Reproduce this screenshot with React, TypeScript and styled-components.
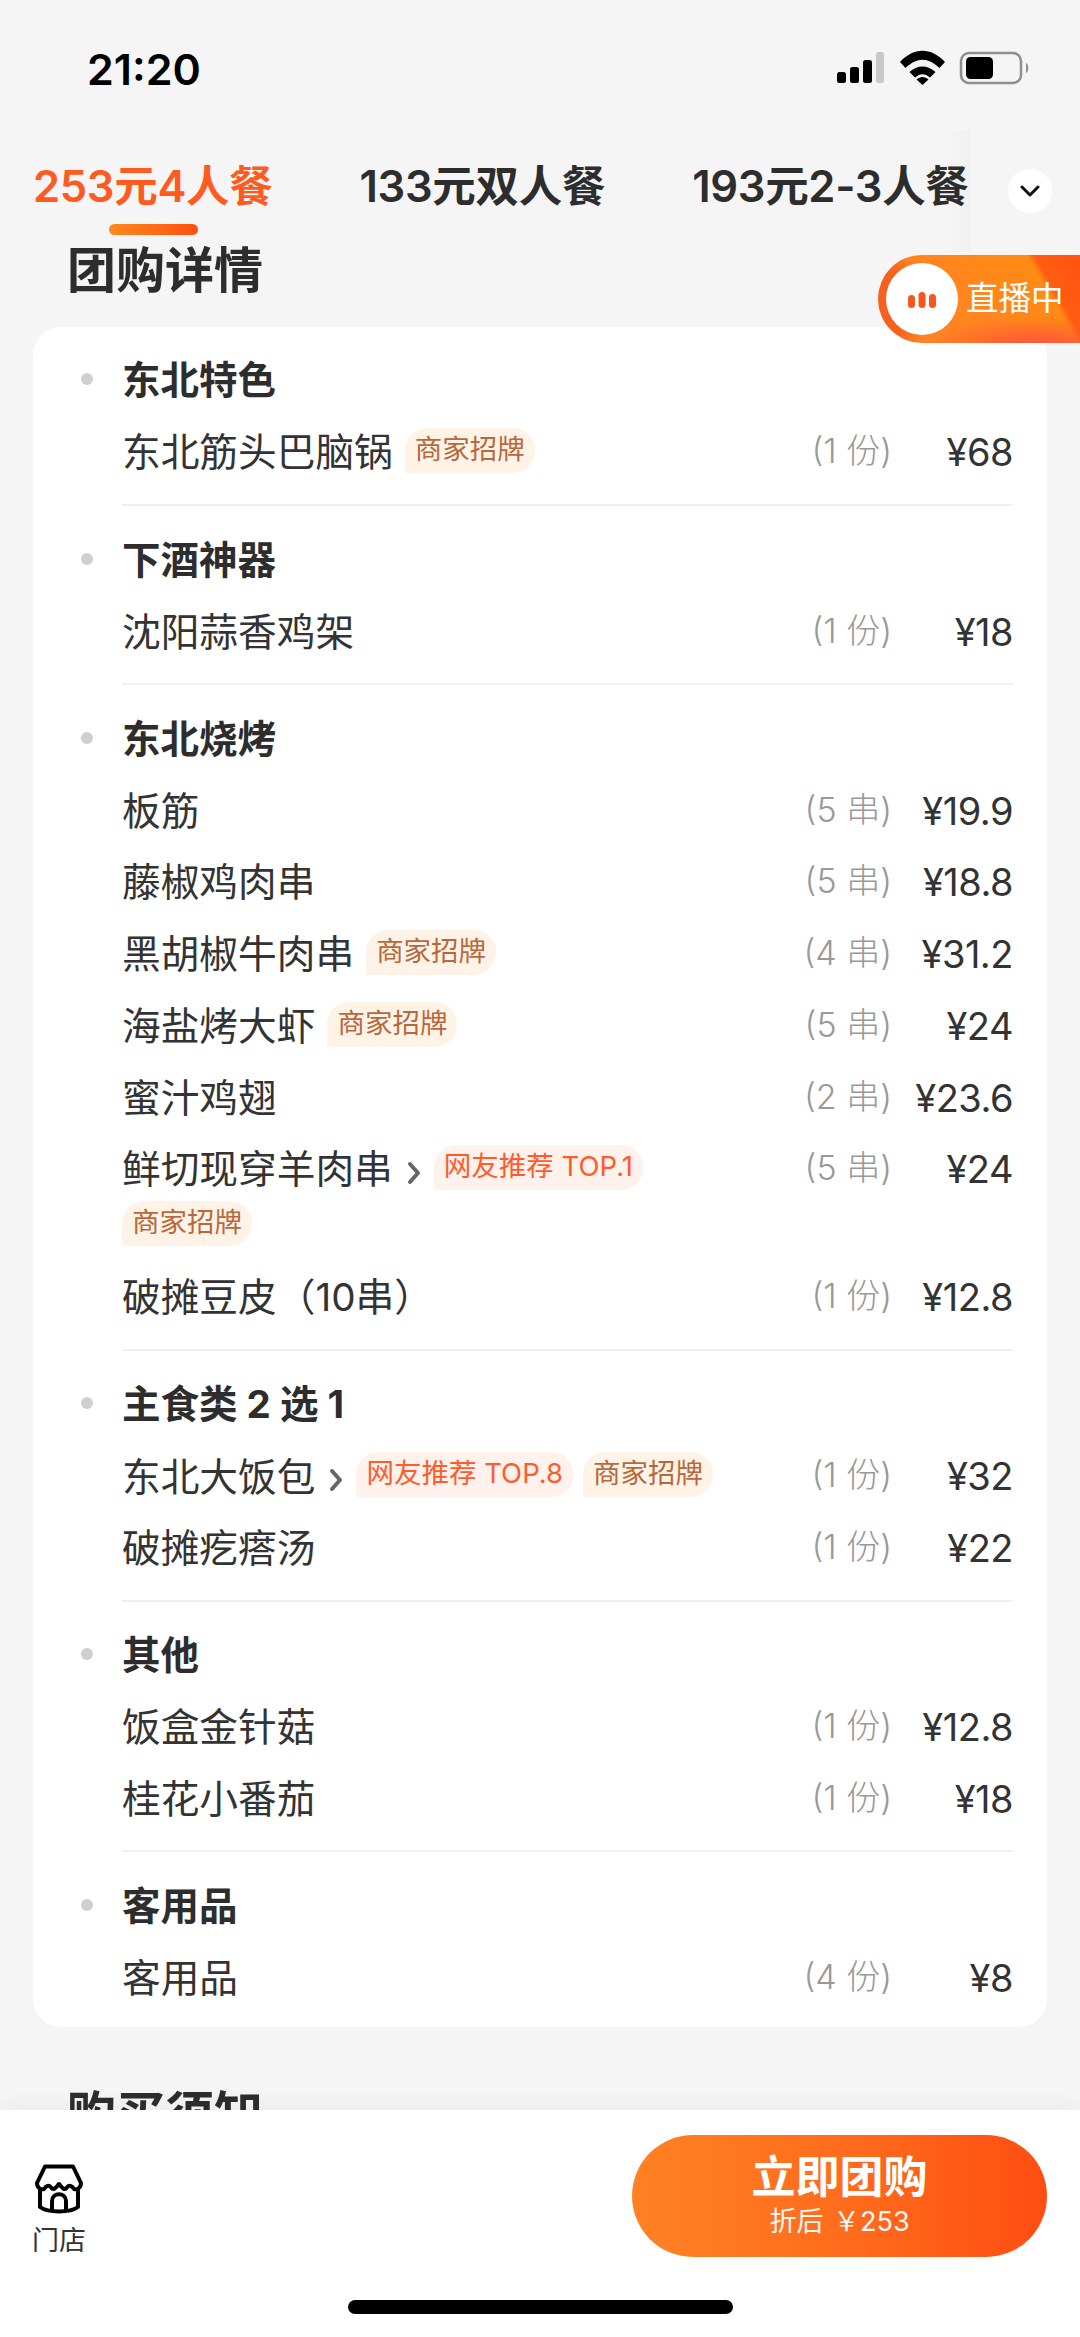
import React from "react";
import styled, { createGlobalStyle } from "styled-components";

const FONT = `"Inter", "Noto Sans CJK SC", "Noto Sans", sans-serif`;

const Global = createGlobalStyle`
  html, body { margin: 0; padding: 0; background: #f5f5f5; }
  * { box-sizing: border-box; }
`;

const Page = styled.div`
  position: relative;
  width: 1080px;
  height: 2337px;
  overflow: hidden;
  display: flex;
  flex-direction: column;
  background: #f5f5f5;
  font-family: ${FONT};
  color: #2d2d2d;
`;

const Scroll = styled.main`
  flex: 1;
  min-height: 0;
  overflow: hidden;
`;

const StatusBar = styled.header`
  height: 130px;
  padding: 46px 51px 0 87px;
  display: flex;
  justify-content: space-between;
  align-items: flex-start;
`;

const Time = styled.span`
  font-family: "Inter", sans-serif;
  font-size: 43px;
  line-height: 46px;
  font-weight: 600;
  color: #000;
`;

const StatusIcons = styled.svg`
  display: block;
  margin-top: 4px;
`;

const TabBar = styled.nav`
  position: relative;
  height: 122px;
  display: flex;
  align-items: flex-start;
`;

const TabScroller = styled.div`
  position: relative;
  width: 970px;
  height: 122px;
  padding: 21px 0 0 33px;
  display: flex;
  gap: 87px;
  overflow: hidden;
  flex: none;
  &::after {
    content: "";
    position: absolute;
    top: 0;
    right: 0;
    width: 24px;
    height: 100%;
    background: linear-gradient(90deg, rgba(0, 0, 0, 0), rgba(0, 0, 0, 0.018));
  }
`;

const Tab = styled.div<{ $active?: boolean }>`
  position: relative;
  flex: none;
  font-size: 43.5px;
  line-height: 70px;
  font-weight: 600;
  letter-spacing: -0.3px;
  white-space: nowrap;
  color: ${(p) => (p.$active ? "#ff5a1f" : "#2d2d2d")};
`;

const TabLine = styled.span`
  position: absolute;
  left: 76px;
  top: 73px;
  width: 89px;
  height: 11px;
  border-radius: 6px;
  background: linear-gradient(90deg, #ff8a1c, #ff4f12);
`;

const Expand = styled.button`
  position: absolute;
  left: 1008px;
  top: 39px;
  width: 44px;
  height: 44px;
  border: 0;
  padding: 0;
  border-radius: 50%;
  background: #fff;
  display: flex;
  align-items: center;
  justify-content: center;
`;

const Heading = styled.h2`
  margin: 0;
  padding-left: 67px;
  height: 75px;
  font-size: 49px;
  line-height: 38px;
  font-weight: 600;
  color: #2d2d2d;
`;

const Card = styled.section`
  margin: 0 33px;
  padding: 18px 34px 0 89px;
  height: 1700px;
  background: #fff;
  border-radius: 28px;
`;

const Group = styled.div<{ $last?: boolean }>`
  padding-bottom: ${(p) => (p.$last ? "0" : "15px")};
  margin-bottom: ${(p) => (p.$last ? "0" : "18.6px")};
  border-bottom: ${(p) => (p.$last ? "0" : "2px solid #f0f0f0")};
`;

const GroupTitle = styled.h3`
  position: relative;
  margin: 0;
  padding: 8px 0 9px;
  font-size: 38.5px;
  line-height: 55px;
  font-weight: 700;
  color: #2d2d2d;
  &::before {
    content: "";
    position: absolute;
    left: -41px;
    top: 28px;
    width: 12px;
    height: 12px;
    border-radius: 50%;
    background: #cfcfcf;
  }
`;

const Row = styled.div`
  display: flex;
  align-items: flex-start;
  padding: 8px 0;
`;

const NameArea = styled.div`
  width: 630px;
  flex: none;
  display: flex;
  flex-wrap: wrap;
  align-items: center;
  column-gap: 10px;
`;

const Name = styled.span`
  font-size: 38.7px;
  line-height: 55.5px;
  color: #333;
  white-space: nowrap;
  margin-right: 2px;
`;

const Chevron = styled.svg`
  display: block;
  flex: none;
  margin: 5px 3px 0 2px;
`;

const Tag = styled.span<{ $kind: "brand" | "rank" }>`
  height: 45px;
  padding: 0 10px;
  font-size: 27.5px;
  line-height: 43px;
  white-space: nowrap;
  border-radius: 22px 22px 22px 2px;
  margin: 3px 0 8px;
  background: ${(p) => (p.$kind === "brand" ? "#fff3e8" : "#fff1ec")};
  color: ${(p) => (p.$kind === "brand" ? "#b9683b" : "#ff5c2e")};
`;

const Qty = styled.span`
  flex: 1;
  text-align: right;
  font-size: 34px;
  line-height: 52px;
  font-weight: 300;
  color: #999;
  white-space: nowrap;
`;

const Price = styled.span`
  width: 121px;
  flex: none;
  text-align: right;
  font-size: 38px;
  line-height: 55.5px;
  letter-spacing: -0.5px;
  color: #333;
  white-space: nowrap;
`;

const NextHeading = styled.h2`
  margin: 0;
  padding: 64px 0 0 67px;
  font-size: 49px;
  line-height: 48px;
  font-weight: 600;
`;

const LivePill = styled.div`
  position: absolute;
  left: 878px;
  top: 255px;
  width: 202px;
  height: 88px;
  border-radius: 44px 0 0 44px;
  background:
    radial-gradient(ellipse 110px 30px at 160px 92px, #ff4f3c 0%, rgba(255, 79, 60, 0) 100%),
    radial-gradient(ellipse 50px 60px at 0px 50px, #f5601f 60%, rgba(245, 96, 31, 0) 100%),
    linear-gradient(60deg, #ff7f2a 0%, #ff8a14 79%, #ff5c12 82%, #ff5212 100%);
  display: flex;
  align-items: center;
  padding-left: 8px;
  gap: 8px;
`;

const LiveDot = styled.span`
  width: 72px;
  height: 72px;
  border-radius: 50%;
  background: #fff;
  display: flex;
  align-items: center;
  justify-content: center;
  flex: none;
`;

const LiveText = styled.span`
  font-size: 32.5px;
  line-height: 40px;
  color: #fff;
  white-space: nowrap;
`;

const BottomBar = styled.footer`
  position: relative;
  height: 227px;
  flex: none;
  background: #fff;
  box-shadow: 0 -8px 16px rgba(0, 0, 0, 0.035);
  padding: 25px 33px 0 32px;
  display: flex;
  justify-content: space-between;
  align-items: flex-start;
`;

const StoreLink = styled.div`
  padding-top: 29px;
  display: flex;
  flex-direction: column;
  align-items: center;
  width: 54px;
`;

const StoreLabel = styled.span`
  height: 25px;
  overflow: hidden;
  margin-top: 13px;
  font-size: 27px;
  line-height: 27px;
  color: #333;
  white-space: nowrap;
`;

const BuyButton = styled.button`
  width: 415px;
  height: 122px;
  border: 0;
  border-radius: 61px;
  background: linear-gradient(90deg, #ff8224 0%, #ff6a1c 55%, #ff4d12 100%);
  color: #fff;
  font-family: ${FONT};
  display: flex;
  flex-direction: column;
  align-items: center;
  padding: 14px 0 0;
`;

const BuyTitle = styled.span`
  font-size: 44px;
  line-height: 56px;
  font-weight: 600;
`;

const BuySub = styled.span`
  font-size: 27px;
  line-height: 34px;
  font-weight: 400;
  opacity: 0.95;
  word-spacing: 2px;
`;

const HomeBar = styled.span`
  position: absolute;
  left: 348px;
  top: 190px;
  width: 385px;
  height: 14px;
  border-radius: 7px;
  background: #000;
`;

type Item = { name: string; qty: string; price: string; link?: boolean; tags?: ("brand" | string)[] };
const groups: { title: string; items: Item[] }[] = [
  { title: "东北特色", items: [{ name: "东北筋头巴脑锅", qty: "(1 份)", price: "¥68", tags: ["brand"] }] },
  { title: "下酒神器", items: [{ name: "沈阳蒜香鸡架", qty: "(1 份)", price: "¥18" }] },
  {
    title: "东北烧烤",
    items: [
      { name: "板筋", qty: "(5 串)", price: "¥19.9" },
      { name: "藤椒鸡肉串", qty: "(5 串)", price: "¥18.8" },
      { name: "黑胡椒牛肉串", qty: "(4 串)", price: "¥31.2", tags: ["brand"] },
      { name: "海盐烤大虾", qty: "(5 串)", price: "¥24", tags: ["brand"] },
      { name: "蜜汁鸡翅", qty: "(2 串)", price: "¥23.6" },
      { name: "鲜切现穿羊肉串", qty: "(5 串)", price: "¥24", link: true, tags: ["网友推荐 TOP.1", "brand"] },
      { name: "破摊豆皮（10串）", qty: "(1 份)", price: "¥12.8" },
    ],
  },
  {
    title: "主食类 2 选 1",
    items: [
      { name: "东北大饭包", qty: "(1 份)", price: "¥32", link: true, tags: ["网友推荐 TOP.8", "brand"] },
      { name: "破摊疙瘩汤", qty: "(1 份)", price: "¥22" },
    ],
  },
  {
    title: "其他",
    items: [
      { name: "饭盒金针菇", qty: "(1 份)", price: "¥12.8" },
      { name: "桂花小番茄", qty: "(1 份)", price: "¥18" },
    ],
  },
  { title: "客用品", items: [{ name: "客用品", qty: "(4 份)", price: "¥8" }] },
];

function StatusGlyphs() {
  return (
    <StatusIcons width="193" height="36" viewBox="836 50 193 36">
      <rect x="837" y="72" width="9" height="11" rx="2.5" fill="#000" />
      <rect x="850" y="67" width="9" height="16" rx="2.5" fill="#000" />
      <rect x="863" y="60" width="9" height="23" rx="2.5" fill="#000" />
      <rect x="876" y="52" width="8" height="31" rx="2.5" fill="#c9c9c9" />
      <path d="M900 62 C914 47 931 47 945 62 L939.500 68 C928 57 917 57 905.500 68 Z" fill="#000" />
      <path d="M909.500 72 C917 64.500 928 64.500 935.500 72 L930 77.500 C925 73 920 73 915 77.500 Z" fill="#000" />
      <path d="M916.500 79.500 C920 76 925 76 928.500 79.500 L922.500 85 Z" fill="#000" />
      <rect x="961" y="53" width="60" height="30" rx="8" fill="none" stroke="#8e8e8e" strokeWidth="2.500" />
      <rect x="966" y="57" width="27" height="22" rx="4.500" fill="#000" />
      <path d="M1026 63 C1029 64 1029 72 1026 73 Z" fill="#8e8e8e" />
    </StatusIcons>
  );
}

function StoreIcon() {
  return (
    <svg width="50" height="50" viewBox="0 0 50 50" fill="none" stroke="#000" strokeWidth="4" strokeLinecap="round" strokeLinejoin="round">
      <path d="M11 2.500 H39 L47 19 C47 24 43 26 40 25 C38 22 35 20 32.500 24 C30 27 27 22 25 20 C23 22 20 27 17.500 24 C15 20 12 22 10 25 C7 26 3 24 3 19 Z" />
      <path d="M6 26 V43 C14 49 36 49 44 43 V26" />
      <path d="M18 45 V37 C18 28 32 28 32 37 V45" />
    </svg>
  );
}

export default function App() {
  return (
    <Page>
      <Global />
      <StatusBar>
        <Time>21:20</Time>
        <StatusGlyphs />
      </StatusBar>
      <Scroll>
        <TabBar>
          <TabScroller>
            <Tab $active>
              253元4人餐
              <TabLine />
            </Tab>
            <Tab>133元双人餐</Tab>
            <Tab>193元2-3人餐</Tab>
          </TabScroller>
          <Expand aria-label="展开">
            <svg width="20" height="12" viewBox="0 0 20 12" fill="none" stroke="#111" strokeWidth="3" strokeLinecap="round" strokeLinejoin="round">
              <path d="M2 2 L10 10 L18 2" />
            </svg>
          </Expand>
        </TabBar>
        <Heading>团购详情</Heading>
        <Card>
          {groups.map((g, i) => (
            <Group key={g.title} $last={i === groups.length - 1}>
              <GroupTitle>{g.title}</GroupTitle>
              {g.items.map((it) => (
                <Row key={it.name}>
                  <NameArea>
                    <Name>{it.name}</Name>
                    {it.link && (
                      <Chevron width="14" height="24" viewBox="0 0 14 24" fill="none" stroke="#666" strokeWidth="4" strokeLinecap="round" strokeLinejoin="round">
                        <path d="M3 3 L11 12 L3 21" />
                      </Chevron>
                    )}
                    {(it.tags || []).map((t) =>
                      t === "brand" ? (
                        <Tag key={t} $kind="brand">商家招牌</Tag>
                      ) : (
                        <Tag key={t} $kind="rank">{t}</Tag>
                      )
                    )}
                  </NameArea>
                  <Qty>{it.qty}</Qty>
                  <Price>{it.price}</Price>
                </Row>
              ))}
            </Group>
          ))}
        </Card>
        <NextHeading>购买须知</NextHeading>
      </Scroll>
      <LivePill>
        <LiveDot>
          <svg width="28" height="18" viewBox="0 0 28 18" fill="#f4581f">
            <rect x="0" y="5" width="7" height="13" rx="3.500" />
            <rect x="10.500" y="2" width="7" height="16" rx="3.500" />
            <rect x="21" y="4" width="7" height="14" rx="3.500" />
          </svg>
        </LiveDot>
        <LiveText>直播中</LiveText>
      </LivePill>
      <BottomBar>
        <StoreLink>
          <StoreIcon />
          <StoreLabel>门店</StoreLabel>
        </StoreLink>
        <BuyButton>
          <BuyTitle>立即团购</BuyTitle>
          <BuySub>折后 ￥253</BuySub>
        </BuyButton>
        <HomeBar />
      </BottomBar>
    </Page>
  );
}
